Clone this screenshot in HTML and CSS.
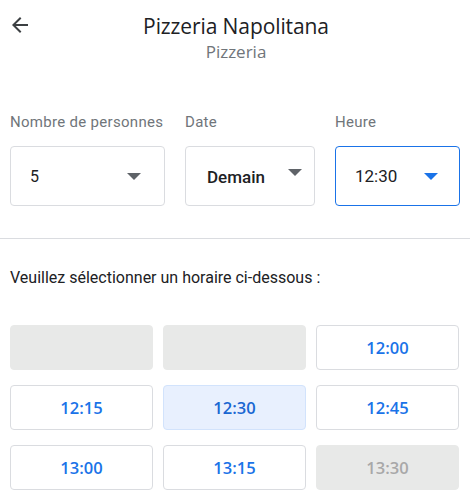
FILE: index.html
```html
<!DOCTYPE html>
<html lang="fr">
<head>
<meta charset="utf-8">
<link rel="stylesheet" href="styles.css">
</head>
<body>
<div class="page">
  <header class="header">
    <button class="back" aria-label="Retour">
      <svg width="24" height="24" viewBox="0 0 24 24"><path d="M20 11H7.83l5.59-5.59L12 4l-8 8 8 8 1.41-1.41L7.83 13H20v-2z" fill="#3c4043"/></svg>
    </button>
    <div class="titles">
      <div class="title">Pizzeria Napolitana</div>
      <div class="subtitle">Pizzeria</div>
    </div>
  </header>

  <section class="fields">
    <div class="field f1">
      <div class="label">Nombre de personnes</div>
      <div class="select"><span class="val">5</span><span class="caret"></span></div>
    </div>
    <div class="field f2">
      <div class="label">Date</div>
      <div class="select date"><span class="val">Demain</span><span class="caret"></span></div>
    </div>
    <div class="field f3">
      <div class="label">Heure</div>
      <div class="select active"><span class="val">12:30</span><span class="caret blue"></span></div>
    </div>
  </section>

  <div class="divider"></div>

  <p class="prompt">Veuillez sélectionner un horaire ci-dessous :</p>

  <div class="slots">
    <div class="slot empty"></div>
    <div class="slot empty"></div>
    <div class="slot">12:00</div>
    <div class="slot">12:15</div>
    <div class="slot selected">12:30</div>
    <div class="slot">12:45</div>
    <div class="slot">13:00</div>
    <div class="slot">13:15</div>
    <div class="slot disabled">13:30</div>
  </div>
</div>
</body>
</html>
```

FILE: styles.css
```css
* { box-sizing: border-box; }
html, body { margin: 0; padding: 0; background: #fff; }
body { font-family: Roboto, "Liberation Sans", sans-serif; color: #202124; }
.page { width: 470px; }

.header { position: relative; height: 110px; }
.back {
  position: absolute; left: 8px; top: 13px;
  border: 0; background: none; padding: 0; width: 24px; height: 24px; cursor: pointer;
}
.back svg { display: block; }
.titles { text-align: center; padding-top: 13px; padding-left: 2px; }
.title { font-family: "Open Sans", sans-serif; font-size: 21px; line-height: 26px; color: #202124; letter-spacing: -0.1px; }
.subtitle { font-family: "Open Sans", sans-serif; font-size: 17px; line-height: 26px; color: #70757a; }

.fields { display: flex; padding: 0 10px; gap: 20px; }
.field { display: flex; flex-direction: column; }
.f1 { width: 155px; }
.f2 { width: 130px; }
.f3 { width: 125px; }
.label { font-size: 15px; letter-spacing: 0.3px; line-height: 20px; color: #70757a; height: 36px; padding-top: 2px; white-space: nowrap; }
.select {
  height: 60px; border: 1px solid #dadce0; border-radius: 4px;
  display: flex; align-items: center; justify-content: space-between;
  padding: 0 23px 0 19px; font-size: 16px; color: #202124;
}
.select.date { padding: 0 12px 0 21px; font-size: 17px; font-weight: 500; }
.select.date .val { margin-top: 2px; }
.select.date .caret { margin-top: -7px; }
.select.active { border-color: #1a73e8; padding: 0 21px 0 19px; }
.select.active .val { font-size: 17px; }
.caret {
  width: 0; height: 0;
  border-left: 7px solid transparent; border-right: 7px solid transparent;
  border-top: 7px solid #5f6368;
}
.caret.blue { border-top-color: #1a73e8; }

.divider { height: 1px; background: #dadce0; margin-top: 32px; }

.prompt { margin: 29px 0 0 10px; font-size: 16px; line-height: 20px; color: #202124; }

.slots {
  display: grid; grid-template-columns: repeat(3, 143px);
  column-gap: 10px; row-gap: 15px;
  padding: 0 0 0 10px; margin-top: 37px;
}
.slot {
  height: 45px; border: 1px solid #dadce0; border-radius: 4px;
  display: flex; align-items: center; justify-content: center;
  font-family: "Open Sans", sans-serif; font-size: 16.5px; font-weight: 600; color: #1a73e8;
}
.slot.empty { background: #e8e9e8; border-color: #e8e9e8; }
.slot.selected { background: #e8f0fe; border-color: #d2e3fc; color: #1967d2; }
.slot.disabled { background: #e8e9e8; border-color: #e8e9e8; color: #a8a8a8; }
```
